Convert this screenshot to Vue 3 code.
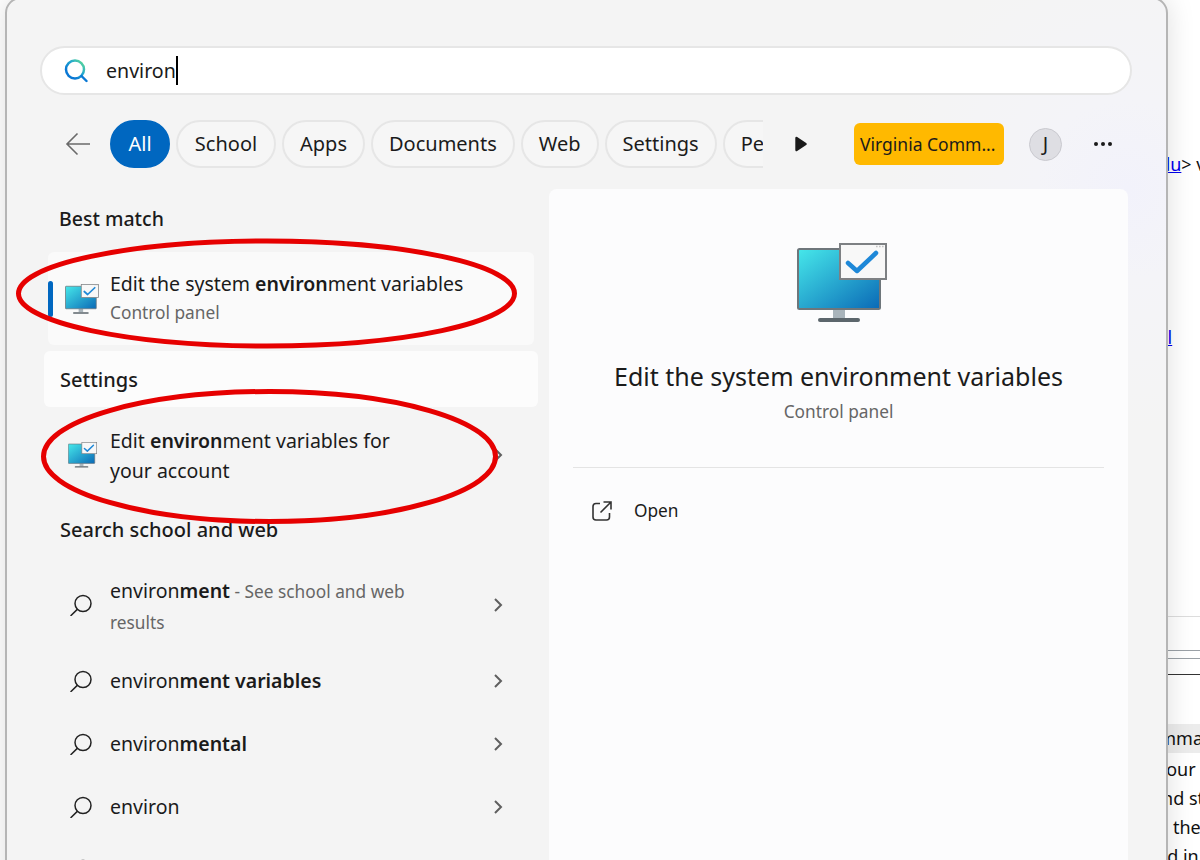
<template>
  <div class="desktop">
    <svg class="defs" width="0" height="0">
      <defs>
        <linearGradient id="screenGrad" x1="0" y1="0" x2="1" y2="1">
          <stop offset="0" stop-color="#46e8ea" />
          <stop offset="1" stop-color="#0a69b6" />
        </linearGradient>
        <linearGradient id="lensGrad" x1="1" y1="0" x2="0" y2="1">
          <stop offset="0" stop-color="#66e08c" />
          <stop offset="0.4" stop-color="#22a8cf" />
          <stop offset="0.75" stop-color="#0a78d4" />
        </linearGradient>
        <symbol id="pc" viewBox="0 0 90 80">
          <rect x="36" y="66" width="12" height="9" fill="#a9b4bb" />
          <rect x="21" y="75" width="42" height="4" rx="2" fill="#5c666c" />
          <rect x="1" y="6" width="82" height="60" rx="1.5" fill="url(#screenGrad)" stroke="#6e767b" stroke-width="2" />
          <rect x="43" y="1" width="46" height="35" fill="#f8f8f8" stroke="#7d8083" stroke-width="2" />
          <path d="M79 3.5 H87" stroke="#c4c4c4" stroke-width="1.4" stroke-dasharray="1.6 1.4" />
          <path d="M51 20 L60 28 L79 10" fill="none" stroke="#1e88d8" stroke-width="4.5" stroke-linecap="round" stroke-linejoin="round" />
        </symbol>
        <symbol id="find" viewBox="0 0 22 22">
          <circle cx="13" cy="9.5" r="8" fill="none" stroke="#222" stroke-width="1.5" />
          <path d="M7.3 15.4 L1 21.5" fill="none" stroke="#222" stroke-width="1.5" stroke-linecap="round" />
        </symbol>
        <symbol id="chev" viewBox="0 0 12 16">
          <path d="M3 2 L9 8 L3 14" fill="none" stroke="#5f5f5f" stroke-width="2" />
        </symbol>
      </defs>
    </svg>

    <div class="page">
      <div class="page-line first"><a>edu</a>&gt; v</div>
      <div class="page-line second"><a>url</a></div>
      <div class="rule rule-a"></div>
      <div class="rule rule-b"></div>
      <div class="rule rule-c"></div>
      <div class="rule rule-d"></div>
      <div class="band">Comma</div>
      <div class="copy c1">your</div>
      <div class="copy c2">and st</div>
      <div class="copy c3">the</div>
      <div class="copy c4">and in</div>
    </div>

    <div class="window">
      <div class="search">
        <svg class="lens" viewBox="0 0 24 24" width="24" height="24">
          <circle cx="11" cy="10.5" r="9" fill="none" stroke="url(#lensGrad)" stroke-width="2.5" />
          <path d="M17.5 17 L22.5 22" fill="none" stroke="#0a78d4" stroke-width="2.4" stroke-linecap="round" />
        </svg>
        <span class="query">environ</span><span class="caret"></span>
      </div>

      <div class="tabs">
        <svg class="back" viewBox="0 0 26 24" width="26" height="24">
          <path d="M25 12 H2 M12.5 1.5 L2 12 L12.5 22.5" fill="none" stroke="#6a6a6a" stroke-width="1.6" />
        </svg>
        <div class="pills">
          <div v-for="tab in tabs" :key="tab" class="pill" :class="{ active: tab === 'All' }">{{ tab }}</div>
        </div>
        <svg class="more" viewBox="0 0 12 16" width="12" height="16">
          <path d="M1.5 2 L10.5 8 L1.5 14 Z" fill="#1a1a1a" stroke="#1a1a1a" stroke-width="2.4" stroke-linejoin="round" />
        </svg>
        <div class="org">Virginia Comm...</div>
        <div class="avatar">J</div>
        <div class="dots"><i></i><i></i><i></i></div>
      </div>

      <div class="main">
        <div class="results">
          <div class="heading best">Best match</div>
          <div class="hit selected">
            <span class="marker"></span>
            <svg class="pc-small"><use href="#pc" /></svg>
            <div class="hit-text">
              <div class="title">Edit the system <b>environ</b>ment variables</div>
              <div class="sub">Control panel</div>
            </div>
          </div>
          <div class="heading settings">Settings</div>
          <div class="hit account">
            <svg class="pc-smaller"><use href="#pc" /></svg>
            <div class="title wrap">Edit <b>environ</b>ment variables for your account</div>
            <svg class="chev"><use href="#chev" /></svg>
          </div>
          <div class="heading web">Search school and web</div>
          <div v-for="(row, i) in rows" :key="i" class="row" :class="{ tall: row.note }">
            <svg class="find"><use href="#find" /></svg>
            <div class="row-text">{{ row.head }}<b>{{ row.tail }}</b><span v-if="row.note" class="note"> - See school and web results</span></div>
            <svg class="chev"><use href="#chev" /></svg>
          </div>
        </div>

        <div class="detail">
          <svg class="pc-large"><use href="#pc" /></svg>
          <div class="detail-title">Edit the system environment variables</div>
          <div class="detail-sub">Control panel</div>
          <div class="divider"></div>
          <div class="action">
            <svg viewBox="0 0 22 22" width="22" height="22">
              <path d="M9 3.5 H5 A3 3 0 0 0 2 6.5 V17 A3 3 0 0 0 5 20 H15.5 A3 3 0 0 0 18.5 17 V13" fill="none" stroke="#333" stroke-width="1.6" />
              <path d="M12.5 2 H20 V9.5 M20 2 L9.5 12.5" fill="none" stroke="#333" stroke-width="1.6" />
            </svg>
            <span>Open</span>
          </div>
        </div>
      </div>
    </div>

    <svg class="marks" width="1200" height="860">
      <ellipse cx="266.5" cy="293.5" rx="248" ry="52.5" />
      <ellipse cx="269.5" cy="456.5" rx="226" ry="65" />
    </svg>
  </div>
</template>

<script setup>
const tabs = ["All", "School", "Apps", "Documents", "Web", "Settings", "People"];
const rows = [
  { head: "environ", tail: "ment", note: true },
  { head: "environ", tail: "ment variables" },
  { head: "environ", tail: "mental" },
  { head: "environ", tail: "" },
  { head: "", tail: "" },
];
</script>

<style>
html,
body {
  margin: 0;
  background: #fff;
  overflow: hidden;
}
</style>

<style scoped>
.desktop {
  position: relative;
  width: 1200px;
  height: 860px;
  overflow: hidden;
  background: #fff;
  font-family: "Noto Sans", "Open Sans", sans-serif;
  color: #1b1b1b;
}

.defs {
  position: absolute;
}

/* browser page showing behind the search window */
.page {
  height: 860px;
  font-size: 18px;
  color: #111;
  white-space: nowrap;
}

.page a {
  color: #0000ee;
  text-decoration: underline;
}

.page-line,
.copy,
.band {
  line-height: 29px;
}

.page-line {
  padding-left: 1149px;
}

.first {
  padding-top: 150px;
}

.second {
  margin-top: 144px;
  padding-left: 1149px;
}

.rule {
  height: 1px;
  margin-left: 1160px;
}

.rule-a {
  margin-top: 264px;
  background: #dddddd;
}

.rule-b {
  margin-top: 33px;
  background: #9aa0a6;
}

.rule-c {
  margin-top: 7px;
  background: #9aa0a6;
}

.rule-d {
  margin-top: 15px;
  background: #333;
}

.band {
  margin-top: 49px;
  padding-left: 1137px;
  background: linear-gradient(#ececec, #ececec) no-repeat 1160px 0 / 40px 100%;
}

.c1 {
  margin-top: 2px;
  padding-left: 1157px;
}

.c2 {
  padding-left: 1152px;
}

.c3 {
  padding-left: 1173px;
}

.c4 {
  padding-left: 1146px;
}

.window {
  position: absolute;
  left: 5px;
  top: -3px;
  width: 1159px;
  height: 900px;
  border: 2px solid #b5b5b5;
  border-radius: 16px;
  background: radial-gradient(circle at 1120px 190px, #f2f2fb 0, #f4f4f8 90px, #f4f4f4 240px);
  box-shadow: 0 0 28px rgba(0, 0, 0, 0.13);
  overflow: hidden;
}

.search {
  display: flex;
  align-items: center;
  box-sizing: border-box;
  width: 1092px;
  height: 49px;
  margin: 47px 0 0 33px;
  padding-left: 22px;
  border: 2px solid #e6e6e6;
  border-radius: 25px;
  background: #fff;
}

.lens {
  flex: none;
}

.query {
  margin-left: 18px;
  font-size: 19.6px;
}

.caret {
  width: 2px;
  height: 29px;
  background: #000;
}

.tabs {
  display: flex;
  align-items: center;
  height: 48px;
  margin-top: 25px;
  padding-left: 58px;
}

.back {
  flex: none;
}

.pills {
  display: flex;
  gap: 6px;
  width: 653px;
  margin-left: 19px;
  overflow: hidden;
}

.pill {
  flex: none;
  box-sizing: border-box;
  height: 48px;
  padding: 0 16px;
  border: 2px solid #e6e6e6;
  border-radius: 24px;
  background: #f6f6f6;
  font-size: 20px;
  line-height: 44px;
}

.pill:nth-child(2) {
  min-width: 100px;
  text-align: center;
}

.pill.active {
  min-width: 60px;
  border-color: #0067c0;
  background: #0067c0;
  color: #fff;
  text-align: center;
}

.more {
  flex: none;
  margin-left: 32px;
}

.org {
  flex: none;
  box-sizing: border-box;
  width: 150px;
  height: 42px;
  margin-left: 47px;
  padding-left: 6px;
  border-radius: 6px;
  background: #ffb900;
  font-size: 17.5px;
  line-height: 42px;
  white-space: nowrap;
}

.avatar {
  flex: none;
  box-sizing: border-box;
  width: 33px;
  height: 33px;
  margin-left: 25px;
  border: 1px solid #c9c9cf;
  border-radius: 50%;
  background: #dedee3;
  font-size: 20px;
  line-height: 30px;
  text-align: center;
}

.dots {
  display: flex;
  gap: 3px;
  margin-left: 32px;
}

.dots i {
  width: 4px;
  height: 4px;
  border-radius: 50%;
  background: #1a1a1a;
}

.main {
  display: flex;
  gap: 11px;
  margin: 21px 0 0 37px;
}

.results {
  flex: none;
  width: 494px;
}

.heading {
  font-size: 20px;
  font-weight: 500;
}

.best {
  height: 63px;
  padding-left: 15px;
  font-size: 19.5px;
  line-height: 59px;
}

.hit {
  display: flex;
  align-items: center;
  box-sizing: border-box;
}

.selected {
  position: relative;
  width: 486px;
  height: 93px;
  margin-left: 4px;
  padding-left: 17px;
  border-radius: 6px;
  background: #fafafa;
}

.hit-text {
  margin-top: -1px;
}

.marker {
  position: absolute;
  left: 0;
  top: 29px;
  width: 5px;
  height: 36px;
  border-radius: 3px;
  background: #0067c0;
}

.pc-small {
  flex: none;
  width: 34px;
  height: 30px;
  margin-right: 11px;
}

.title {
  font-size: 19.5px;
  line-height: 30px;
}

.sub {
  font-size: 17.3px;
  line-height: 28px;
  color: #666;
}

b {
  font-weight: 600;
}

.settings {
  height: 56px;
  margin-top: 6px;
  padding-left: 16px;
  border-radius: 6px;
  background: #fcfcfc;
  line-height: 58px;
}

.account {
  height: 96px;
  padding-left: 24px;
}

.pc-smaller {
  flex: none;
  width: 29px;
  height: 26px;
  margin-right: 13px;
}

.wrap {
  width: 300px;
  padding-top: 2px;
}

.chev {
  flex: none;
  width: 12px;
  height: 16px;
  margin-left: auto;
  margin-right: 34px;
}

.web {
  height: 57px;
  padding-left: 16px;
  line-height: 54px;
}

.row {
  display: flex;
  align-items: center;
  height: 63px;
  padding-left: 26px;
}

.row.tall {
  height: 89px;
}

.row.tall .row-text {
  padding-top: 4px;
}

.find {
  flex: none;
  width: 22px;
  height: 22px;
  margin-right: 18px;
}

.row-text {
  width: 330px;
  font-size: 19.5px;
  line-height: 30px;
}

.note {
  font-size: 17.3px;
  color: #666;
}

.detail {
  display: flex;
  flex-direction: column;
  align-items: center;
  box-sizing: border-box;
  width: 579px;
  height: 720px;
  padding-top: 54px;
  border-radius: 8px;
  background: #fcfcfd;
}

.pc-large {
  width: 90px;
  height: 80px;
  margin-left: 6px;
}

.detail-title {
  margin-top: 35px;
  font-size: 25px;
  line-height: 36px;
}

.detail-sub {
  margin-top: 5px;
  font-size: 17.3px;
  line-height: 26px;
  color: #666;
}

.divider {
  align-self: stretch;
  height: 1px;
  margin: 42px 24px 0;
  background: #e4e4e4;
}

.action {
  display: flex;
  align-items: center;
  align-self: flex-start;
  gap: 21px;
  margin: 31px 0 0 42px;
  font-size: 17.3px;
}

.marks {
  position: absolute;
  left: 0;
  top: 0;
  pointer-events: none;
}

.marks ellipse {
  fill: none;
  stroke: #e60000;
  stroke-width: 5;
}
</style>
